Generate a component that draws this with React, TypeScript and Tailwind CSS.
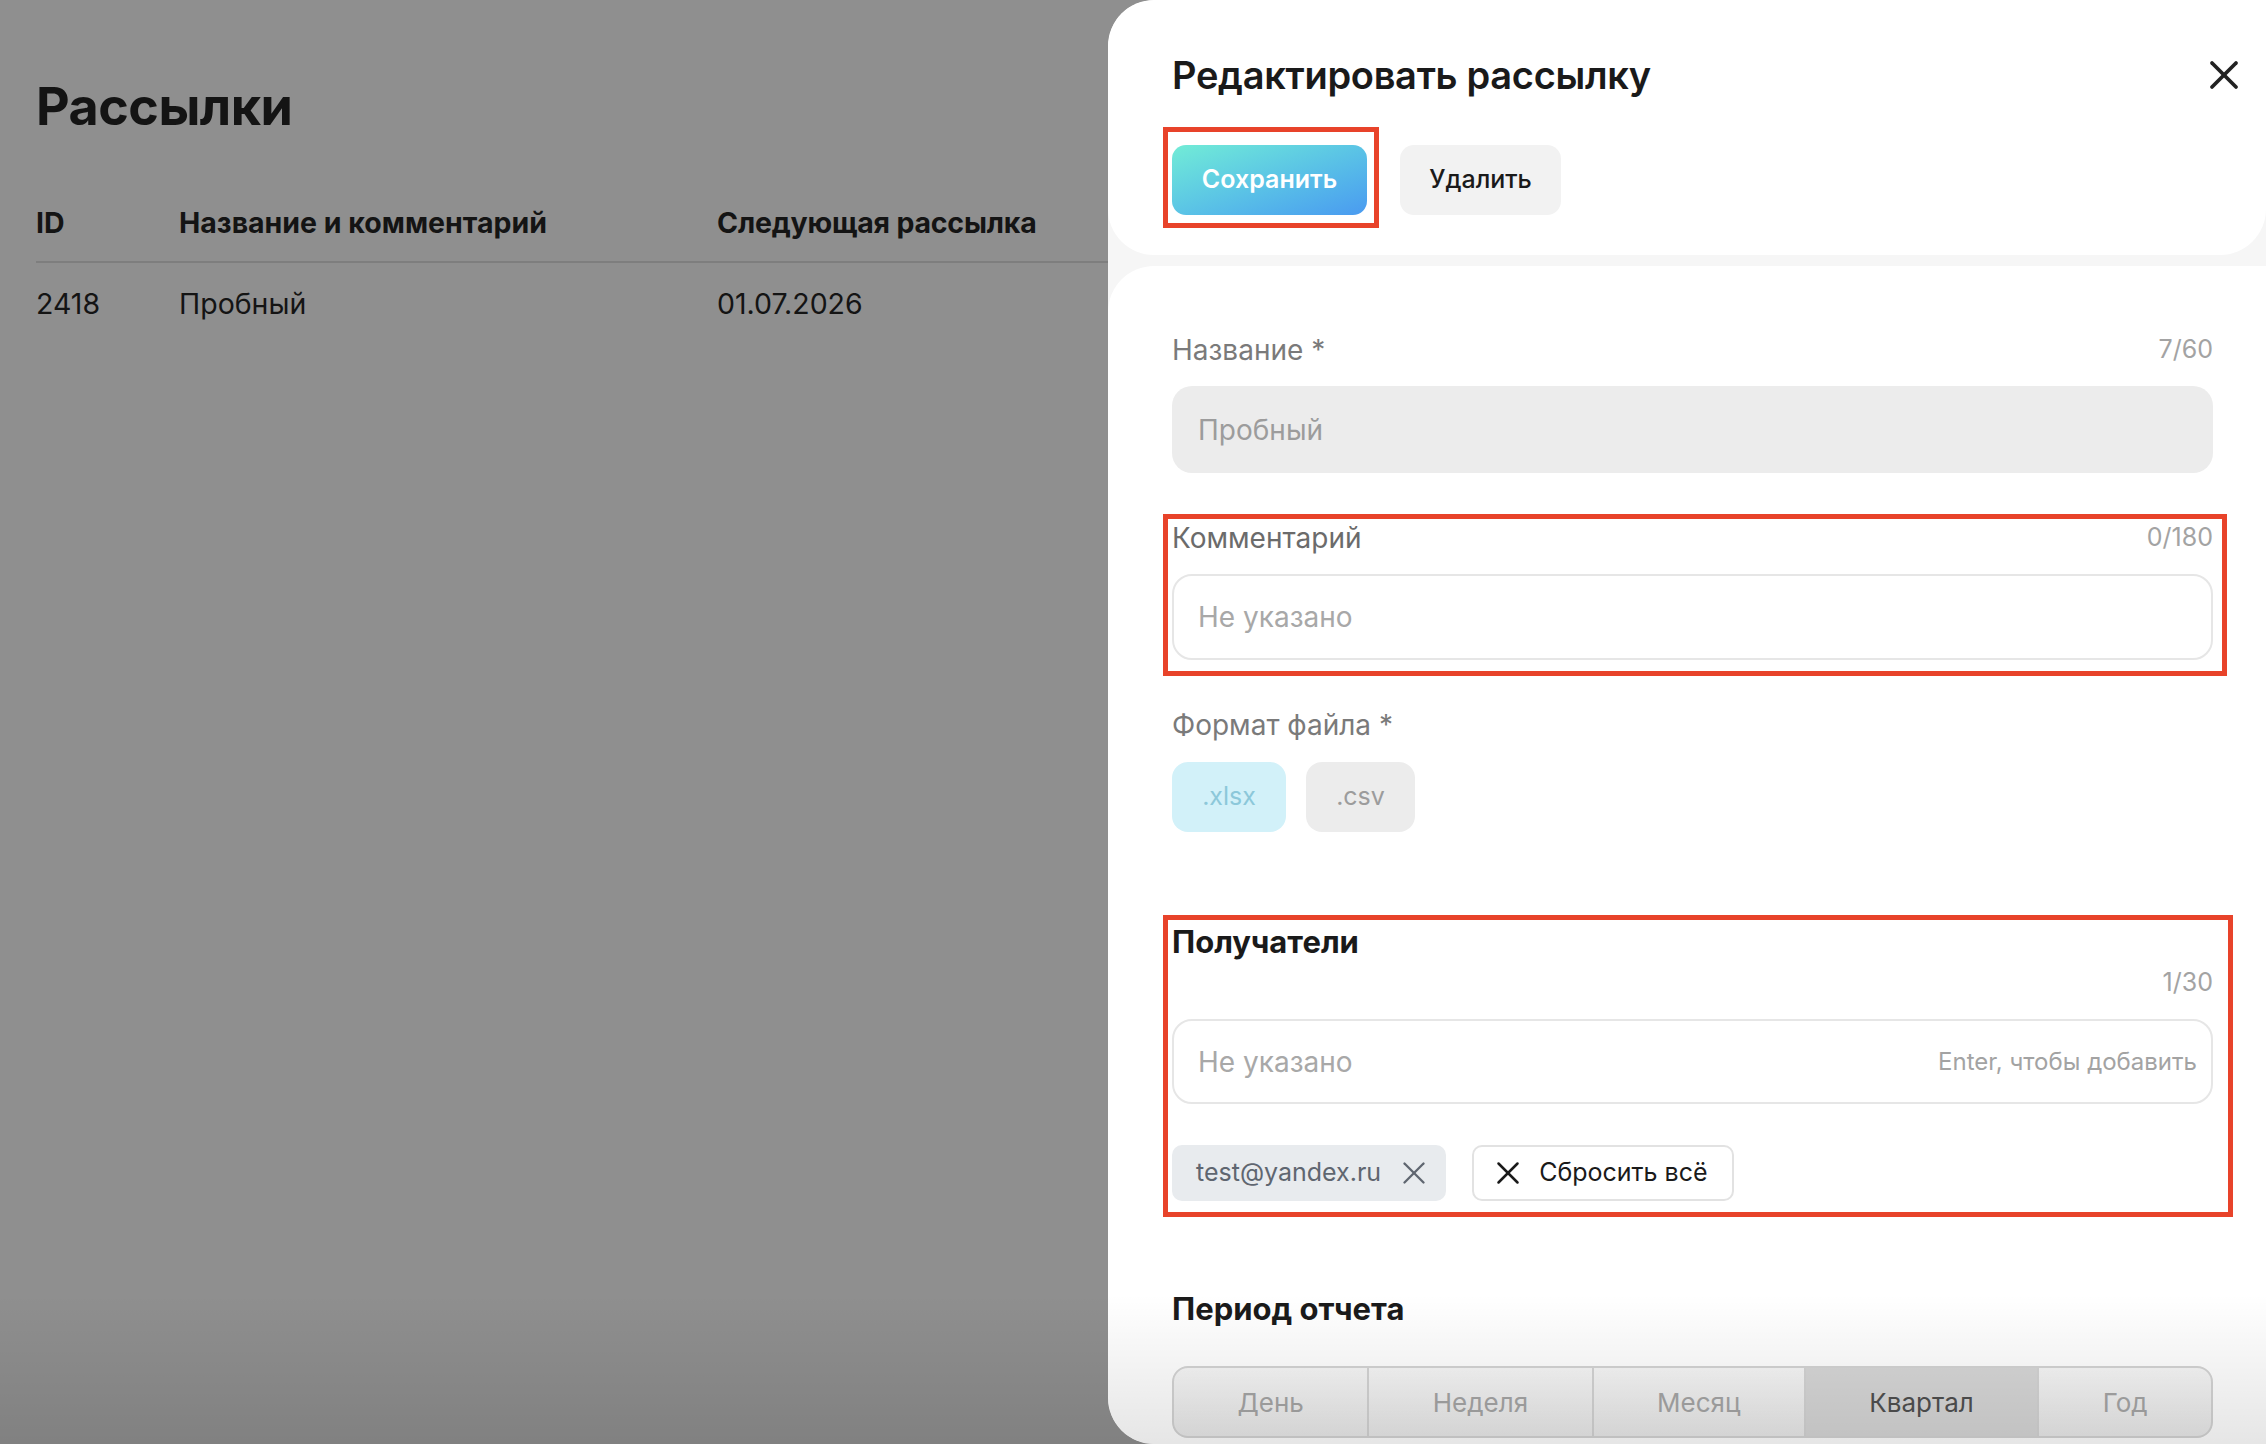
import { X } from "lucide-react";

const font = { fontFamily: "Inter, 'Noto Sans', sans-serif" };

function Counter({ children }: { children: React.ReactNode }) {
  return <span className="text-[25px] text-[#a3a3a3]">{children}</span>;
}

function Label({ text, count, tone = "text-[#7a7a7a]" }: { text: string; count?: string; tone?: string }) {
  return (
    <div className="flex h-[40px] items-center justify-between">
      <span className={`text-[28px] ${tone}`}>{text}</span>
      {count && <Counter>{count}</Counter>}
    </div>
  );
}

const periods = ["День", "Неделя", "Месяц", "Квартал", "Год"];

export default function App() {
  return (
    <div style={font} className="relative flex h-[1444px] w-[2266px] overflow-hidden bg-[#8f8f8f] text-[#141414]">
      {/* list under the drawer */}
      <div className="min-w-0 flex-1 pl-[36px]">
        <h1 className="mt-[75px] h-[64px] text-[52px] font-bold leading-[64px] tracking-[-0.5px]">Рассылки</h1>
        <div className="mt-[64px] flex h-[60px] items-start border-b-2 border-[#7e7e7e] text-[28.5px] font-bold leading-[40px]">
          <div className="w-[143px]">ID</div>
          <div className="w-[538px]">Название и комментарий</div>
          <div className="whitespace-nowrap tracking-[-0.2px]">Следующая рассылка</div>
        </div>
        <div className="mt-[21px] flex text-[28.5px] leading-[40px]">
          <div className="w-[143px]">2418</div>
          <div className="w-[538px]">Пробный</div>
          <div>01.07.2026</div>
        </div>
      </div>

      {/* drawer */}
      <aside className="flex h-full w-[1158px] shrink-0 flex-col gap-[11px] overflow-hidden rounded-l-[46px] bg-[#f6f6f6]">
        <header className="rounded-b-[46px] rounded-tl-[46px] bg-white pb-[40px] pl-[64px] pr-[18px] pt-[50px]">
          <div className="flex h-[50px] items-center justify-between">
            <h2 className="text-[38px] font-semibold tracking-[-0.3px] text-[#1a1a1a]">Редактировать рассылку</h2>
            <X className="h-[48px] w-[48px] text-[#222]" strokeWidth={1.9} />
          </div>
          <div className="mt-[45px] flex gap-[33px]">
            <div className="relative">
              <button className="h-[70px] w-[195px] rounded-[14px] bg-gradient-to-br from-[#72ecd6] to-[#4a9af0] text-[25px] font-semibold text-white">
                Сохранить
              </button>
              <div className="pointer-events-none absolute -bottom-[13px] -left-[9px] -right-[12px] -top-[18px] border-[5px] border-[#e8432a]" />
            </div>
            <button className="h-[70px] w-[161px] rounded-[14px] bg-[#f2f2f2] text-[25px] font-medium text-[#1a1a1a]">
              Удалить
            </button>
          </div>
        </header>

        <section className="flex-1 rounded-l-[46px] bg-white pl-[64px] pr-[53px] pt-[64px]">
          <Label text="Название *" count="7/60" />
          <div className="mt-[16px] flex h-[87px] items-center rounded-[20px] bg-[#ececec] px-[26px] text-[28px] text-[#9c9c9c]">
            Пробный
          </div>

          <div className="relative mt-[45px]">
            <Label text="Комментарий" count="0/180" tone="text-[#6b6b6b]" />
            <div className="mt-[16px] flex h-[86px] items-center rounded-[20px] border-2 border-[#e6e6e6] px-[24px] text-[28px] text-[#a8a8a8]">
              Не указано
            </div>
            <div className="pointer-events-none absolute -bottom-[16px] -left-[9px] -right-[14px] -top-[4px] border-[5px] border-[#e8432a]" />
          </div>

          <div className="mt-[45px]">
            <Label text="Формат файла *" />
            <div className="mt-[17px] flex gap-[20px] text-[25px]">
              <div className="flex h-[70px] w-[114px] items-center justify-center rounded-[16px] bg-[#d2f1f9] text-[#8cc8da]">.xlsx</div>
              <div className="flex h-[70px] w-[109px] items-center justify-center rounded-[16px] bg-[#ececec] text-[#9c9c9c]">.csv</div>
            </div>
          </div>

          <div className="relative mt-[90px]">
            <div className="h-[40px] text-[31px] font-bold leading-[40px] text-[#1a1a1a]">Получатели</div>
            <div className="flex h-[41px] items-center justify-end">
              <Counter>1/30</Counter>
            </div>
            <div className="mt-[16px] flex h-[85px] items-center justify-between rounded-[20px] border-2 border-[#e6e6e6] pl-[24px] pr-[14px]">
              <span className="text-[28px] text-[#a8a8a8]">Не указано</span>
              <span className="text-[24px] text-[#a3a3a3]">Enter, чтобы добавить</span>
            </div>
            <div className="mt-[41px] flex gap-[26px]">
              <div className="flex h-[56px] items-center gap-[14px] rounded-[10px] bg-[#e8ebee] pl-[24px] pr-[13px] text-[25px] text-[#5f6670]">
                test@yandex.ru
                <X className="h-[38px] w-[38px]" strokeWidth={1.5} />
              </div>
              <div className="flex h-[56px] items-center gap-[12px] rounded-[10px] border-2 border-[#e2e2e2] pl-[15px] pr-[24px] text-[25px] text-[#1a1a1a]">
                <X className="h-[38px] w-[38px]" strokeWidth={1.6} />
                Сбросить всё
              </div>
            </div>
            <div className="pointer-events-none absolute -bottom-[16px] -left-[9px] -right-[20px] -top-[7px] border-[5px] border-[#e8432a]" />
          </div>

          <div className="mt-[88px] h-[40px] text-[31px] font-bold leading-[40px] text-[#1a1a1a]">Период отчета</div>
          <div className="mt-[37px] flex h-[72px] overflow-hidden rounded-[16px] border-2 border-[#d4d4d4] bg-gradient-to-b from-[#f6f6f6] to-[#eaeaea]">
            {periods.map((p, i) => (
              <div
                key={p}
                className={`flex flex-auto items-center justify-center text-[26px] ${i > 0 ? "border-l-2 border-[#d4d4d4]" : ""} ${
                  p === "Квартал" ? "bg-[#d7d7d7] text-[#505050]" : "text-[#a6a6a6]"
                }`}
              >
                {p}
              </div>
            ))}
          </div>
        </section>
      </aside>

      {/* bottom fade */}
      <div className="pointer-events-none absolute inset-x-0 bottom-0 h-[150px] bg-gradient-to-b from-transparent to-black/10" />
    </div>
  );
}
